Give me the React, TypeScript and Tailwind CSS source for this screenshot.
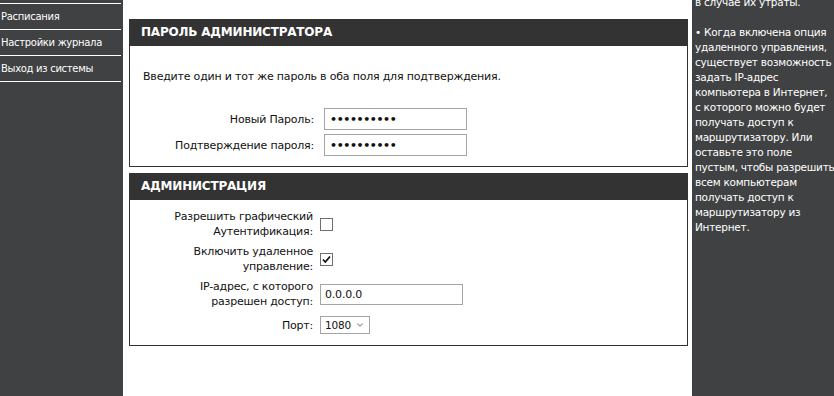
import React from 'react';
import { ChevronDown } from 'lucide-react';

const menu = ['Расписания', 'Настройки журнала', 'Выход из системы'];

const helpLines = [
    '• Когда включена опция',
    'удаленного управления,',
    'существует возможность',
    'задать IP-адрес',
    'компьютера в Интернет,',
    'с которого можно будет',
    'получать доступ к',
    'маршрутизатору. Или',
    'оставьте это поле',
    'пустым, чтобы разрешить',
    'всем компьютерам',
    'получать доступ к',
    'маршрутизатору из',
    'Интернет.',
];

const SectionBox: React.FC<{ title: string; children: React.ReactNode }> = ({ title, children }) => (
    <section className="border border-t-0 border-[#333333]">
        <h2 className="h-[27px] bg-[#333333] pl-[11px] flex items-center text-white font-bold text-[12px]">
            {title}
        </h2>
        {children}
    </section>
);

const PasswordField: React.FC<{ label: string }> = ({ label }) => (
    <div className="flex items-center">
        <span className="w-[184px] text-right">{label}</span>
        <div className="ml-[10px] w-[143px] h-[22px] border border-[#a5a5a5] flex items-center pl-[5px] text-[11px] font-bold tracking-[-0.4px]">
            ••••••••••
        </div>
    </div>
);

const CheckBox: React.FC<{ checked?: boolean }> = ({ checked }) => (
    <div className="w-[13px] h-[13px] border border-[#707070] bg-white flex items-center justify-center">
        {checked && (
            <svg width="9" height="9" viewBox="0 0 9 9">
                <path d="M1 4.5 L3.3 7 L8 1.5" fill="none" stroke="#111" strokeWidth="1.8" />
            </svg>
        )}
    </div>
);

const AdminRow: React.FC<{ label: React.ReactNode; children: React.ReactNode }> = ({ label, children }) => (
    <div className="flex items-center">
        <span className="w-[183px] text-right">{label}</span>
        <div className="ml-[7px]">{children}</div>
    </div>
);

export default function App() {
    return (
        <div className="flex w-[834px] h-[396px] overflow-hidden bg-white text-[#111] text-[11px] leading-[15px] tracking-[-0.2px] font-['DejaVu_Sans',sans-serif]">
            <aside className="w-[123px] shrink-0 bg-[#404142] text-white pt-[3px] text-[10px] tracking-[-0.3px]">
                <ul className="mr-[2px] border-t border-white">
                    {menu.map(item => (
                        <li key={item} className="h-[26px] border-b border-white pl-[1px] flex items-center whitespace-nowrap">
                            {item}
                        </li>
                    ))}
                </ul>
            </aside>

            <main className="flex-1 pl-[6px] pr-[4px] pt-[19px] flex flex-col gap-[6px]">
                <SectionBox title="ПАРОЛЬ АДМИНИСТРАТОРА">
                    <div className="pt-[23px] pb-[10px]">
                        <p className="pl-[13px]">Введите один и тот же пароль в оба поля для подтверждения.</p>
                        <div className="mt-[24px] flex flex-col gap-[4px]">
                            <PasswordField label="Новый Пароль:" />
                            <PasswordField label="Подтверждение пароля:" />
                        </div>
                    </div>
                </SectionBox>

                <SectionBox title="АДМИНИСТРАЦИЯ">
                    <div className="pt-[9px] pb-[11px] flex flex-col gap-[5px]">
                        <AdminRow label={<>Разрешить графический<br />Аутентификация:</>}>
                            <CheckBox />
                        </AdminRow>
                        <AdminRow label={<>Включить удаленное<br />управление:</>}>
                            <CheckBox checked />
                        </AdminRow>
                        <AdminRow label={<>IP-адрес, с которого<br />разрешен доступ:</>}>
                            <div className="w-[143px] h-[21px] border border-[#a5a5a5] flex items-center pl-[4px]">0.0.0.0</div>
                        </AdminRow>
                        <div className="mt-[2px]">
                            <AdminRow label="Порт:">
                                <div className="w-[50px] h-[18px] border border-[#a5a5a5] flex items-center justify-between pl-[4px] pr-[4px] text-[10.5px]">
                                    <span>1080</span>
                                    <ChevronDown size={10} strokeWidth={2.5} className="text-[#888]" />
                                </div>
                            </AdminRow>
                        </div>
                    </div>
                </SectionBox>
            </main>

            <aside className="w-[142px] shrink-0 bg-[#404142] text-white pl-[3px] text-[10.5px] tracking-[-0.25px]">
                <div className="-mt-[5px] whitespace-nowrap">
                    <p>в случае их утраты.</p>
                    <p className="mt-[15px]">
                        {helpLines.map((line, i) => (
                            <React.Fragment key={i}>
                                {line}
                                <br />
                            </React.Fragment>
                        ))}
                    </p>
                </div>
            </aside>
        </div>
    );
}
